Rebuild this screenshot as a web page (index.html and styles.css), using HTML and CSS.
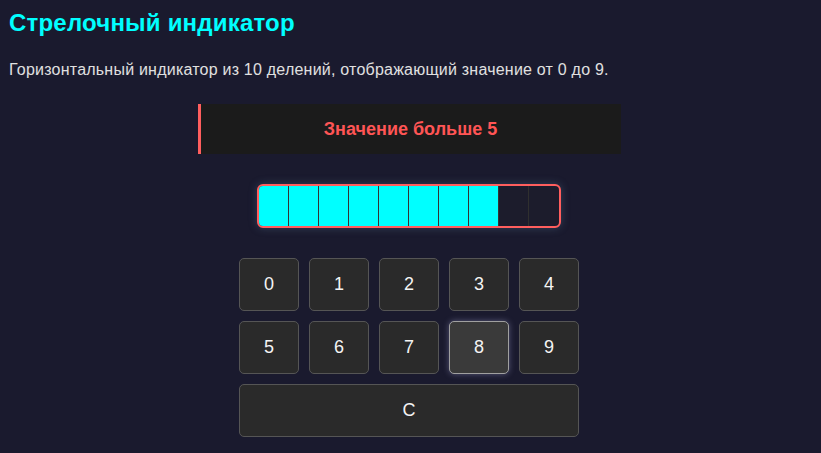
FILE: index.html
```html
<!DOCTYPE html>
<html lang="ru">
<head>
<meta charset="utf-8">
<title>Стрелочный индикатор</title>
<link rel="stylesheet" href="styles.css">
</head>
<body>
<h1 class="title">Стрелочный индикатор</h1>
<p class="desc">Горизонтальный индикатор из 10 делений, отображающий значение от 0 до 9.</p>
<div class="center">
  <div class="alert">Значение больше 5</div>
  <div class="meter">
    <div class="seg on"></div>
    <div class="seg on"></div>
    <div class="seg on"></div>
    <div class="seg on"></div>
    <div class="seg on"></div>
    <div class="seg on"></div>
    <div class="seg on"></div>
    <div class="seg on"></div>
    <div class="seg"></div>
    <div class="seg"></div>
  </div>
  <div class="pad">
    <button class="key">0</button>
    <button class="key">1</button>
    <button class="key">2</button>
    <button class="key">3</button>
    <button class="key">4</button>
    <button class="key">5</button>
    <button class="key">6</button>
    <button class="key">7</button>
    <button class="key active">8</button>
    <button class="key">9</button>
    <button class="key wide">C</button>
  </div>
</div>
</body>
</html>
```
FILE: styles.css
```css
html, body {
  background: #1a1a2e;
}
body {
  margin: 8px;
  font-family: "Liberation Sans", Arial, sans-serif;
  color: #e0e0e0;
}
.title {
  color: #00ffff;
  font-size: 24px;
  font-weight: bold;
  margin: 1px 0 0 1px;
  line-height: 28px;
  letter-spacing: 0.2px;
}
.desc {
  font-size: 16px;
  margin: 23px 0 0 1px;
  line-height: 20px;
  color: #e0e0e0;
  letter-spacing: 0.22px;
}
.center {
  display: flex;
  flex-direction: column;
  align-items: center;
  margin-top: 24px;
  margin-right: 3px;
}
.alert {
  width: 423px;
  height: 50px;
  box-sizing: border-box;
  background: #1b1b1b;
  border-left: 3px solid #ff5e5e;
  color: #ff5555;
  font-weight: bold;
  font-size: 18px;
  display: flex;
  align-items: center;
  justify-content: center;
}
.meter {
  margin-top: 30px;
  display: flex;
  border: 2px solid #ff5e5e;
  border-radius: 6px;
  overflow: hidden;
  box-shadow: 0 0 8px rgba(100, 140, 170, 0.35);
  background: #1c1c2c;
}
.seg {
  width: 29px;
  height: 40px;
  border-right: 1px solid #2f2f2f;
}
.seg:last-child {
  border-right: none;
  width: 30px;
}
.seg.on {
  background: #00ffff;
  border-right-color: #333;
}
.pad {
  margin-top: 30px;
  display: grid;
  grid-template-columns: repeat(5, 60px);
  grid-auto-rows: 53px;
  gap: 10px;
}
.key {
  background: #2a2a2a;
  border: 1px solid #555;
  border-radius: 5px;
  color: #f4f4f4;
  font-family: "Liberation Sans", Arial, sans-serif;
  font-size: 18px;
  padding: 0;
}
.key.active {
  background: #3a3a3a;
  border-color: #a0a0a0;
  box-shadow: 0 0 6px rgba(200, 200, 255, 0.35);
}
.wide {
  grid-column: 1 / -1;
}
```
